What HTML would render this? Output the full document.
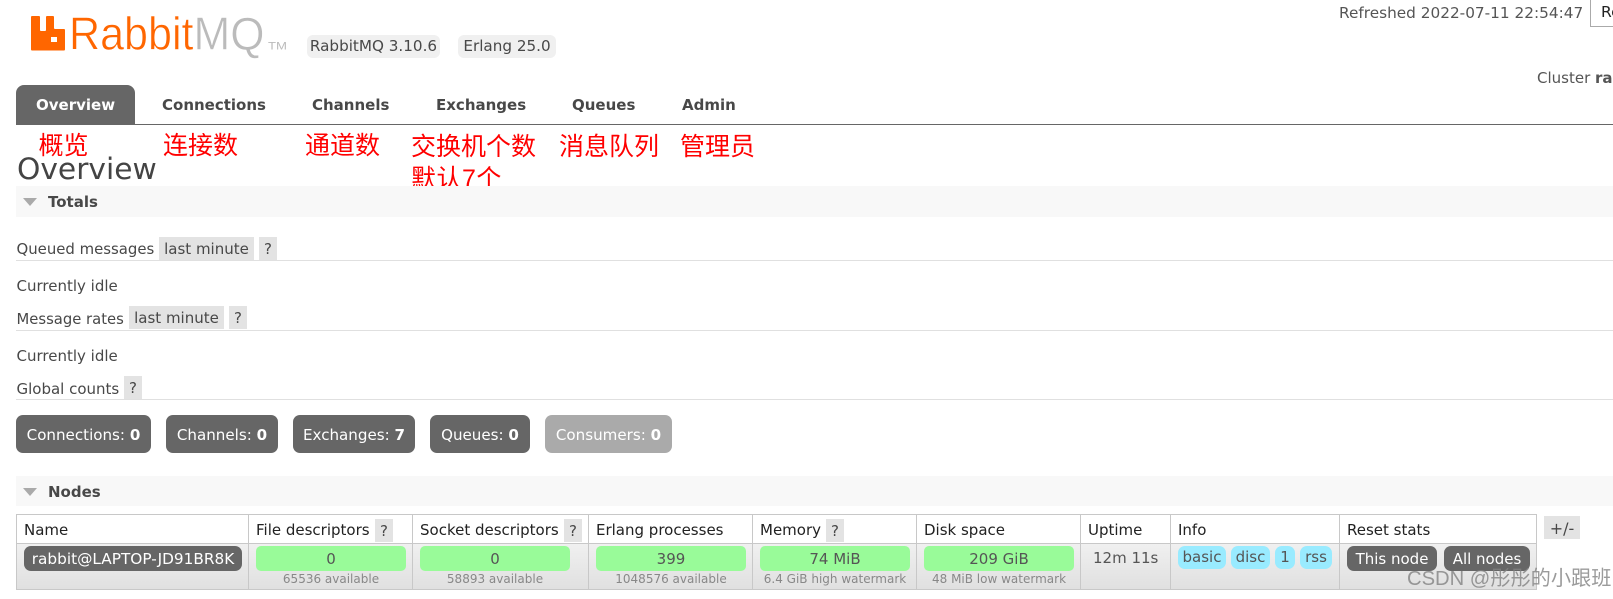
<!DOCTYPE html>
<html><head><meta charset="utf-8"><title>RabbitMQ Management</title>
<style>
html,body{margin:0;padding:0;background:#fff}
body{position:relative;width:1613px;height:599px;overflow:hidden;font-family:"DejaVu Sans","Liberation Sans","Noto Sans CJK SC",sans-serif;font-size:15px;color:#484848}
.t,.b,.r{position:absolute;white-space:nowrap}
.t{line-height:20px;height:20px}
.b{box-sizing:border-box;text-align:center}
.r{font-family:"Liberation Sans","Noto Sans CJK SC",sans-serif;font-size:25px;line-height:26px;color:#f00}
.nav{font-weight:bold;font-size:15px;color:#484848}
.g{background:#e3e3e3;height:23px;line-height:25px;font-size:15px;color:#484848}
.hl{position:absolute;height:1px;background:#e0e0e0;left:16px;right:0}
.bar{position:absolute;left:16px;right:0;background:#f8f8f8}
.c{background:#666;color:#fff;top:415px;height:38px;line-height:40px;border-radius:7px;font-size:15.100px}
.pill{background:#f0f0f0;border-radius:6px;top:35px;height:23px;line-height:23px;color:#484848;font-size:15.200px}
.th{color:#222;top:520px}
.v{background:#99fb99;top:546px;height:25px;line-height:27px;border-radius:5px;color:#555;font-size:15px}
.s{top:569px;color:#888;font-size:12px;text-align:center}
.d{background:#666;color:#fff;top:546px;height:25px;line-height:27px;border-radius:7px;font-size:15px}
.i{background:#99ebff;top:546px;height:23px;line-height:23px;border-radius:7px;color:#555;font-size:15px}
.vl{position:absolute;top:514px;height:76px;width:1px;background:#c8c8c8}
</style></head><body>

<svg style="position:absolute;left:0;top:0" width="300" height="60" viewBox="0 0 300 60">
<path fill="#f60" fill-rule="evenodd" d="M31 17Q31 16 32 16H39Q40 16 40 17V30Q40 31 41 31H45Q46 31 46 30V17Q46 16 47 16H53Q54 16 54 17V28Q54 29 55 29H64Q65 29 65 30V49.500Q65 50.500 64 50.500H32Q31 50.500 31 49.500ZM51 37V42H57V37Z"/>
<text x="69" y="49.500" font-family="Liberation Sans" font-size="46" fill="#f60" stroke="#fff" stroke-width=".6" textLength="124.500" lengthAdjust="spacingAndGlyphs">Rabbit</text>
<text x="193.500" y="49.500" font-family="Liberation Sans" font-size="46" fill="#bbb" stroke="#fff" stroke-width=".6" textLength="71" lengthAdjust="spacingAndGlyphs">MQ</text>
<text x="268" y="49.500" font-family="Liberation Sans" font-size="11" fill="#bbb" textLength="19" lengthAdjust="spacingAndGlyphs">TM</text>
</svg>

<div class="b pill" style="left:307px;width:133px">RabbitMQ 3.10.6</div>
<div class="b pill" style="left:458px;width:98px">Erlang 25.0</div>

<div class="t" style="left:1339px;top:3px;font-size:15.300px;color:#555">Refreshed 2022-07-11 22:54:47</div>
<div style="position:absolute;left:1590px;top:0;width:23px;height:28px;overflow:hidden">
<div style="position:absolute;left:0;top:-2px;width:40px;height:29px;box-sizing:border-box;border:1px solid #aaa;background:#fff;color:#222;padding:3px 0 0 10px;line-height:20px;font-size:15.500px;white-space:nowrap;overflow:hidden">Re</div></div>
<div style="position:absolute;left:1537px;top:68px;width:76px;height:20px;line-height:20px;overflow:hidden;white-space:nowrap;color:#555">Cluster <b>ra</b></div>

<div class="b" style="left:16px;top:85px;width:119px;height:39px;background:#666;border-radius:8px 8px 0 0"></div>
<div style="position:absolute;left:16px;right:0;top:124px;height:1px;background:#666"></div>
<div class="t nav" style="left:36px;top:95px;color:#fff">Overview</div>
<div class="t nav" style="left:162px;top:95px">Connections</div>
<div class="t nav" style="left:312px;top:95px">Channels</div>
<div class="t nav" style="left:436px;top:95px">Exchanges</div>
<div class="t nav" style="left:572px;top:95px">Queues</div>
<div class="t nav" style="left:682px;top:95px">Admin</div>

<div class="r" style="left:38.500px;top:133px">概览</div>
<div class="r" style="left:163px;top:133px">连接数</div>
<div class="r" style="left:305px;top:133px">通道数</div>
<div class="r" style="left:411px;top:134px">交换机个数</div>
<div class="r" style="left:411px;top:166px;letter-spacing:.5px">默认7个</div>
<div class="r" style="left:559px;top:134px">消息队列</div>
<div class="r" style="left:680px;top:134px">管理员</div>

<div class="t" style="left:17px;top:155px;font-size:29.700px;line-height:30px;height:30px;color:#444">Overview</div>

<div class="bar" style="top:186px;height:31px"></div>
<svg style="position:absolute;left:23px;top:198px" width="14" height="8"><path d="M0 0H14L7 8Z" fill="#aaa"/></svg>
<div class="t" style="left:48px;top:192px;font-weight:bold;font-size:15px">Totals</div>

<div class="t" style="left:16.500px;top:239px;font-size:14.900px">Queued messages</div>
<div class="b g" style="left:159px;top:237px;width:95px">last minute</div>
<div class="b g" style="left:259px;top:237px;width:18px">?</div>
<div class="hl" style="top:260px"></div>
<div class="t" style="left:16.500px;top:276px">Currently idle</div>
<div class="t" style="left:16.500px;top:310px;font-size:14.800px">Message rates</div>
<div class="b g" style="left:129px;top:306px;width:95px">last minute</div>
<div class="b g" style="left:229px;top:306px;width:18px">?</div>
<div class="hl" style="top:330px"></div>
<div class="t" style="left:16.500px;top:346px">Currently idle</div>
<div class="t" style="left:16.500px;top:379px">Global counts</div>
<div class="b g" style="left:124px;top:376px;width:18px">?</div>
<div class="hl" style="top:399px"></div>

<div class="b c" style="left:16px;width:135px">Connections: <b>0</b></div>
<div class="b c" style="left:166px;width:112px">Channels: <b>0</b></div>
<div class="b c" style="left:293px;width:122px">Exchanges: <b>7</b></div>
<div class="b c" style="left:430px;width:100px">Queues: <b>0</b></div>
<div class="b c" style="left:545px;width:127px;background:#aaa">Consumers: <b>0</b></div>

<div class="bar" style="top:476px;height:30px"></div>
<svg style="position:absolute;left:23px;top:488px" width="14" height="8"><path d="M0 0H14L7 8Z" fill="#aaa"/></svg>
<div class="t" style="left:48px;top:482px;font-weight:bold;font-size:15px">Nodes</div>

<div style="position:absolute;left:16px;top:514px;width:1521px;height:76px;box-sizing:border-box;border:1px solid #c8c8c8;background:#fff"></div>
<div style="position:absolute;left:17px;top:544px;width:1519px;height:45px;background:linear-gradient(#f0f0f0,#e0e0e0)"></div>
<div style="position:absolute;left:16px;top:543px;width:1521px;height:1px;background:#c8c8c8"></div>
<div class="vl" style="left:248px"></div>
<div class="vl" style="left:412px"></div>
<div class="vl" style="left:588px"></div>
<div class="vl" style="left:752px"></div>
<div class="vl" style="left:916px"></div>
<div class="vl" style="left:1080px"></div>
<div class="vl" style="left:1170px"></div>
<div class="vl" style="left:1339px"></div>

<div class="t th" style="left:24px">Name</div>
<div class="t th" style="left:256px">File descriptors</div>
<div class="b g" style="left:375px;top:519px;width:18px">?</div>
<div class="t th" style="left:420px">Socket descriptors</div>
<div class="b g" style="left:564px;top:519px;width:18px">?</div>
<div class="t th" style="left:596px">Erlang processes</div>
<div class="t th" style="left:760px">Memory</div>
<div class="b g" style="left:826px;top:519px;width:18px">?</div>
<div class="t th" style="left:924px">Disk space</div>
<div class="t th" style="left:1088px">Uptime</div>
<div class="t th" style="left:1178px">Info</div>
<div class="t th" style="left:1347px">Reset stats</div>
<div class="b g" style="left:1544px;top:516px;width:36px;font-size:16px">+/-</div>

<div class="b d" style="left:24px;width:218px;font-size:15.300px">rabbit@LAPTOP-JD91BR8K</div>
<div class="b v" style="left:256px;width:150px">0</div>
<div class="t s" style="left:256px;width:150px">65536 available</div>
<div class="b v" style="left:420px;width:150px">0</div>
<div class="t s" style="left:420px;width:150px">58893 available</div>
<div class="b v" style="left:596px;width:150px">399</div>
<div class="t s" style="left:596px;width:150px">1048576 available</div>
<div class="b v" style="left:760px;width:150px">74 MiB</div>
<div class="t s" style="left:760px;width:150px">6.4 GiB high watermark</div>
<div class="b v" style="left:924px;width:150px">209 GiB</div>
<div class="t s" style="left:924px;width:150px">48 MiB low watermark</div>
<div class="t" style="left:1093px;top:548px;color:#555">12m 11s</div>
<div class="b i" style="left:1178px;width:48px">basic</div>
<div class="b i" style="left:1231px;width:39px">disc</div>
<div class="b i" style="left:1275px;width:20px">1</div>
<div class="b i" style="left:1300px;width:32px">rss</div>
<div class="b d" style="left:1347px;width:90px">This node</div>
<div class="b d" style="left:1444px;width:86px">All nodes</div>

<div class="t" style="left:1407px;top:566px;height:26px;line-height:26px;font-family:'Liberation Sans','Noto Sans CJK SC',sans-serif;font-size:20.200px;color:rgba(130,130,130,.8)">CSDN @彤彤的小跟班</div>
</body></html>
